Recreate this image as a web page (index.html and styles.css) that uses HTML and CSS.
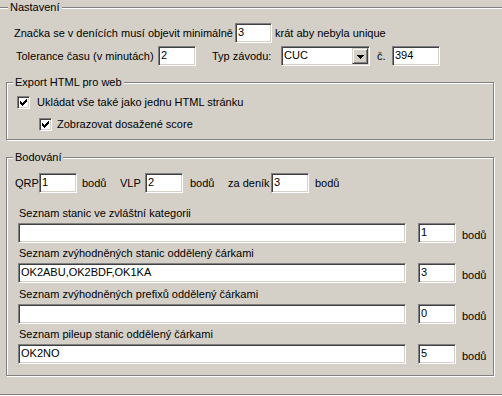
FILE: index.html
```html
<!DOCTYPE html>
<html lang="cs">
<head>
<meta charset="utf-8">
<title>Nastavení</title>
<link rel="stylesheet" href="styles.css">
</head>
<body>
<div class="group outer">
  <span class="legend lg-outer">Nastavení</span>

  <div class="row r1">
    <span class="lbl w221">Značka se v denících musí objevit minimálně</span>
    <div class="field w37">3</div>
    <span class="lbl ml3">krát aby nebyla unique</span>
  </div>

  <div class="row r2">
    <span class="lbl w142">Tolerance času (v minutách)</span>
    <div class="field w38">2</div>
    <span class="lbl w69 ml16">Typ závodu:</span>
    <div class="field select w89">
      <span class="sel-text">CUC</span>
      <span class="dd-btn">
        <svg width="7" height="4" viewBox="0 0 7 4" shape-rendering="crispEdges"><path d="M0 0h7v1h-1v1h-1v1h-1v1h-1v-1h-1v-1h-1v-1h-1z" fill="#000"/></svg>
      </span>
    </div>
    <span class="lbl w15 ml7">č.</span>
    <div class="field w48">394</div>
  </div>

  <div class="group export">
    <span class="legend lg-inner">Export HTML pro web</span>
    <label class="check c1">
      <span class="cbox"><svg width="9" height="9" viewBox="0 0 9 9" shape-rendering="crispEdges"><path d="M1 3h1v1h1v1h1v-1h1v-1h1v-1h1v-1h1v3h-1v1h-1v1h-1v1h-1v1h-1v-1h-1v-1h-1z" fill="#000"/></svg></span>
      <span class="ctext">Ukládat vše také jako jednu HTML stránku</span>
    </label>
    <label class="check c2">
      <span class="cbox"><svg width="9" height="9" viewBox="0 0 9 9" shape-rendering="crispEdges"><path d="M1 3h1v1h1v1h1v-1h1v-1h1v-1h1v-1h1v3h-1v1h-1v1h-1v1h-1v1h-1v-1h-1v-1h-1z" fill="#000"/></svg></span>
      <span class="ctext c2t">Zobrazovat dosažené score</span>
    </label>
  </div>

  <div class="group scoring">
    <span class="legend lg-inner">Bodování</span>

    <div class="row pts">
      <span class="lbl w24">QRP</span>
      <div class="field w38">1</div>
      <span class="lbl w38 ml5">bodů</span>
      <span class="lbl w25">VLP</span>
      <div class="field w38">2</div>
      <span class="lbl w38 ml7">bodů</span>
      <span class="lbl w43">za deník</span>
      <div class="field w38">3</div>
      <span class="lbl ml6">bodů</span>
    </div>

    <div class="cap cap1">Seznam stanic ve zvláštní kategorii</div>
    <div class="row list">
      <div class="field wide"></div>
      <div class="field w38 ml12">1</div>
      <span class="lbl unit">bodů</span>
    </div>

    <div class="cap cap2">Seznam zvýhodněných stanic oddělený čárkami</div>
    <div class="row list">
      <div class="field wide">OK2ABU,OK2BDF,OK1KA</div>
      <div class="field w38 ml12">3</div>
      <span class="lbl unit">bodů</span>
    </div>

    <div class="cap cap3">Seznam zvýhodněných prefixů oddělený čárkami</div>
    <div class="row list">
      <div class="field wide"></div>
      <div class="field w38 ml12">0</div>
      <span class="lbl unit">bodů</span>
    </div>

    <div class="cap cap2">Seznam pileup stanic oddělený čárkami</div>
    <div class="row list">
      <div class="field wide">OK2NO</div>
      <div class="field w38 ml12">5</div>
      <span class="lbl unit">bodů</span>
    </div>
  </div>
</div>
</body>
</html>
```

FILE: styles.css
```css
* { box-sizing: border-box; }

html, body {
  margin: 0;
  padding: 0;
}

body {
  width: 502px;
  height: 396px;
  overflow: hidden;
  background: #d4d0c8;
  color: #000;
  font-family: "Liberation Sans", Arial, sans-serif;
  font-size: 11px;
  line-height: 13px;
}

/* etched group box */
.group {
  position: relative;
  border: 1px solid #808080;
  box-shadow: inset 1px 1px 0 #fff, 1px 1px 0 #fff;
}

.outer {
  margin: 7px 0 0 -10px;
  width: 530px;
  height: 388px;
  padding: 15px 0 0 9px;
}

.legend {
  position: absolute;
  top: -7px;
  padding: 0 2px;
  background: #d4d0c8;
  line-height: 13px;
  white-space: nowrap;
}
.lg-outer { left: 17px; }
.lg-inner { left: 6px; }

.row {
  display: flex;
  align-items: center;
  height: 20px;
}

.lbl {
  white-space: nowrap;
  flex: none;
}

.r1 { margin-left: 14px; }
.r2 { margin-left: 16px; margin-top: 3px; }

.w15 { width: 15px; }
.w24 { width: 24px; }
.w25 { width: 25px; }
.w37 { width: 37px; }
.w38 { width: 38px; }
.w43 { width: 43px; }
.w48 { width: 48px; }
.w69 { width: 69px; }
.w89 { width: 89px; }
.w142 { width: 142px; }
.w221 { width: 221px; }
.ml3 { margin-left: 3px; }
.ml5 { margin-left: 5px; }
.ml6 { margin-left: 6px; }
.ml7 { margin-left: 7px; }
.ml12 { margin-left: 12px; }
.ml16 { margin-left: 16px; }

/* sunken edit field */
.field {
  flex: none;
  height: 20px;
  background: #fff;
  border: 1px solid;
  border-color: #808080 #fff #fff #808080;
  box-shadow: inset 1px 1px 0 #404040, inset -1px -1px 0 #d4d0c8;
  padding: 0 0 2px 2px;
  display: flex;
  align-items: center;
  white-space: nowrap;
  overflow: hidden;
}

.select {
  padding: 1px 1px 1px 2px;
  justify-content: space-between;
}
.sel-text { padding-bottom: 1px; }

.dd-btn {
  width: 16px;
  height: 16px;
  flex: none;
  background: #d4d0c8;
  border: 1px solid;
  border-color: #d4d0c8 #404040 #404040 #d4d0c8;
  box-shadow: inset 1px 1px 0 #fff, inset -1px -1px 0 #808080;
  display: flex;
  align-items: center;
  justify-content: center;
  padding-top: 1px;
}
.dd-btn svg { display: block; }

/* export group */
.export {
  margin: 16px 0 0 6px;
  width: 488px;
  height: 58px;
}

.check {
  display: flex;
  align-items: center;
  height: 13px;
}
.c1 { margin: 13px 0 0 10px; }
.c2 { margin: 9px 0 0 32px; }

.cbox {
  width: 13px;
  height: 13px;
  flex: none;
  background: #fff;
  border: 1px solid;
  border-color: #808080 #fff #fff #808080;
  box-shadow: inset 1px 1px 0 #404040, inset -1px -1px 0 #d4d0c8;
  padding: 1px;
}
.cbox svg { display: block; }

.ctext { margin-left: 7px; white-space: nowrap; }
.c2t { margin-left: 5px; }

/* scoring group */
.scoring {
  margin: 17px 0 0 6px;
  width: 488px;
  height: 219px;
}

.pts {
  margin: 15px 0 0 8px;
}

.cap {
  margin-left: 12px;
  margin-bottom: 3px;
  white-space: nowrap;
}
.cap1 { margin-top: 14px; }
.cap2 { margin-top: 4px; }
.cap3 { margin-top: 5px; }

.list { margin-left: 11px; }
.wide { width: 388px; }

.unit {
  margin-left: 6px;
  align-self: flex-end;
  margin-bottom: 1px;
}
```
